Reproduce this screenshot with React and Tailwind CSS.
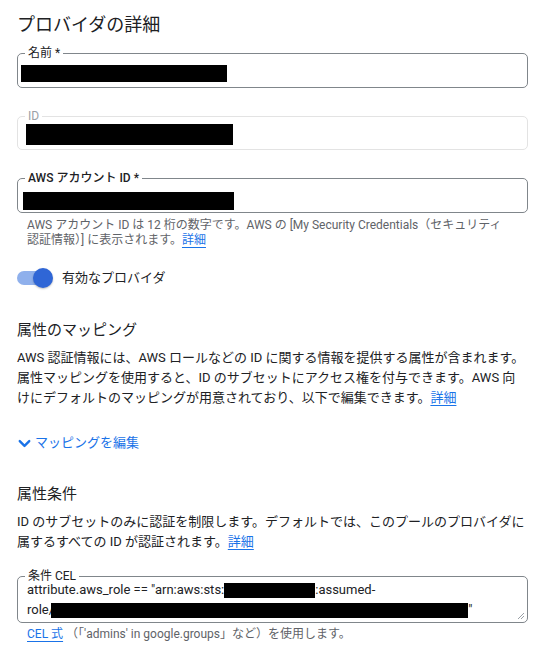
import React from 'react';
import { ChevronDown } from 'lucide-react';

const Redacted = ({ className }) => <span className={`inline-block bg-black align-middle ${className}`} />;

const OutlinedField = ({ label, labelClass = 'text-[#202124]', boxClass = 'border-[#80868b]', className = '', children }) => (
  <div className={`relative rounded-[5px] border ${boxClass} ${className}`}>
    <span className={`absolute -top-[9px] left-[7px] bg-white px-[3px] text-[12px] leading-[16px] ${labelClass}`}>
      {label}
    </span>
    {children}
  </div>
);

const Link = ({ children }) => (
  <a className="text-[#1a73e8] underline underline-offset-[3px] decoration-[#1a73e8]">{children}</a>
);

const App = () => {
  return (
    <div className="w-[558px] h-[660px] overflow-hidden bg-white px-[17px] pt-[13px] font-['Roboto','Noto_Sans_CJK_JP',sans-serif] text-[#202124]">
      <h1 className="text-[18px] leading-[24px] font-normal">プロバイダの詳細</h1>

      {/* Name */}
      <OutlinedField label="名前 *" className="mt-[16px] h-[35px] w-[511px]">
        <div className="pl-[3px] pt-[7px]">
          <Redacted className="w-[206px] h-[17px]" />
        </div>
      </OutlinedField>

      {/* ID (disabled) */}
      <OutlinedField label="ID" labelClass="text-[#9aa0a6]" boxClass="border-[#e3e3e3]" className="mt-[28px] h-[34px] w-[511px]">
        <div className="pl-[8px] pt-[5px]">
          <Redacted className="w-[207px] h-[21px]" />
        </div>
      </OutlinedField>

      {/* AWS account */}
      <OutlinedField label="AWS アカウント ID *" labelClass="text-[#202124] font-medium" className="mt-[28px] h-[35px] w-[511px]">
        <div className="pl-[5px] pt-[9px]">
          <Redacted className="w-[211px] h-[18px]" />
        </div>
      </OutlinedField>
      <p className="mt-[5px] pl-[10px] text-[12px] leading-[15px] text-[#5f6368]">
        AWS アカウント ID は 12 桁の数字です。AWS の [My Security Credentials（セキュリティ
        <br />
        認証情報）] に表示されます。<Link>詳細</Link>
      </p>

      {/* Toggle */}
      <div className="mt-[20px] flex h-[20px] items-center">
        <div className="relative h-[14px] w-[34px] rounded-full bg-[#8fb0ec]">
          <span className="absolute -top-[3px] left-[16px] h-[20px] w-[20px] rounded-full bg-[#2f66d6] shadow-[0_1px_2px_rgba(0,0,0,0.25)]" />
        </div>
        <span className="ml-[11px] text-[13px]">有効なプロバイダ</span>
      </div>

      {/* Attribute mapping */}
      <h2 className="mt-[31px] text-[15px] leading-[22px]">属性のマッピング</h2>
      <p className="mt-[7px] text-[13px] leading-[20px]">
        AWS 認証情報には、AWS ロールなどの ID に関する情報を提供する属性が含まれます。
        <br />
        属性マッピングを使用すると、ID のサブセットにアクセス権を付与できます。AWS 向
        <br />
        けにデフォルトのマッピングが用意されており、以下で編集できます。<Link>詳細</Link>
      </p>

      <div className="mt-[25px] flex h-[20px] items-center text-[#1a73e8]">
        <ChevronDown className="-ml-[2px] h-[19px] w-[19px]" strokeWidth={3} />
        <span className="ml-[1px] text-[13px]">マッピングを編集</span>
      </div>

      {/* Attribute conditions */}
      <h2 className="mt-[30px] text-[15px] leading-[22px]">属性条件</h2>
      <p className="mt-[7px] text-[13px] leading-[20px]">
        ID のサブセットのみに認証を制限します。デフォルトでは、このプールのプロバイダに
        <br />
        属するすべての ID が認証されます。<Link>詳細</Link>
      </p>

      <OutlinedField label="条件 CEL" className="mt-[24px] h-[47px] w-[511px]">
        <div className="pl-[9px] pt-[3px] text-[13px] leading-[20px]">
          <div className="flex items-center">
            attribute.aws_role == &quot;arn:aws:sts:<Redacted className="w-[91px] h-[15px]" />:assumed-
          </div>
          <div className="flex items-center">
            role/<Redacted className="-ml-[3px] w-[417px] h-[15px]" />&quot;
          </div>
        </div>
        <svg className="absolute bottom-[2px] right-[2px]" width="8" height="8" viewBox="0 0 8 8">
          <path d="M7 1L1 7M7 4L4 7" stroke="#9aa0a6" strokeWidth="1" />
        </svg>
      </OutlinedField>
      <p className="mt-[3px] pl-[10px] text-[12px] leading-[16px] text-[#5f6368]">
        <Link>CEL 式</Link> （「'admins' in google.groups」など）を使用します。
      </p>
    </div>
  );
};

export default App;
